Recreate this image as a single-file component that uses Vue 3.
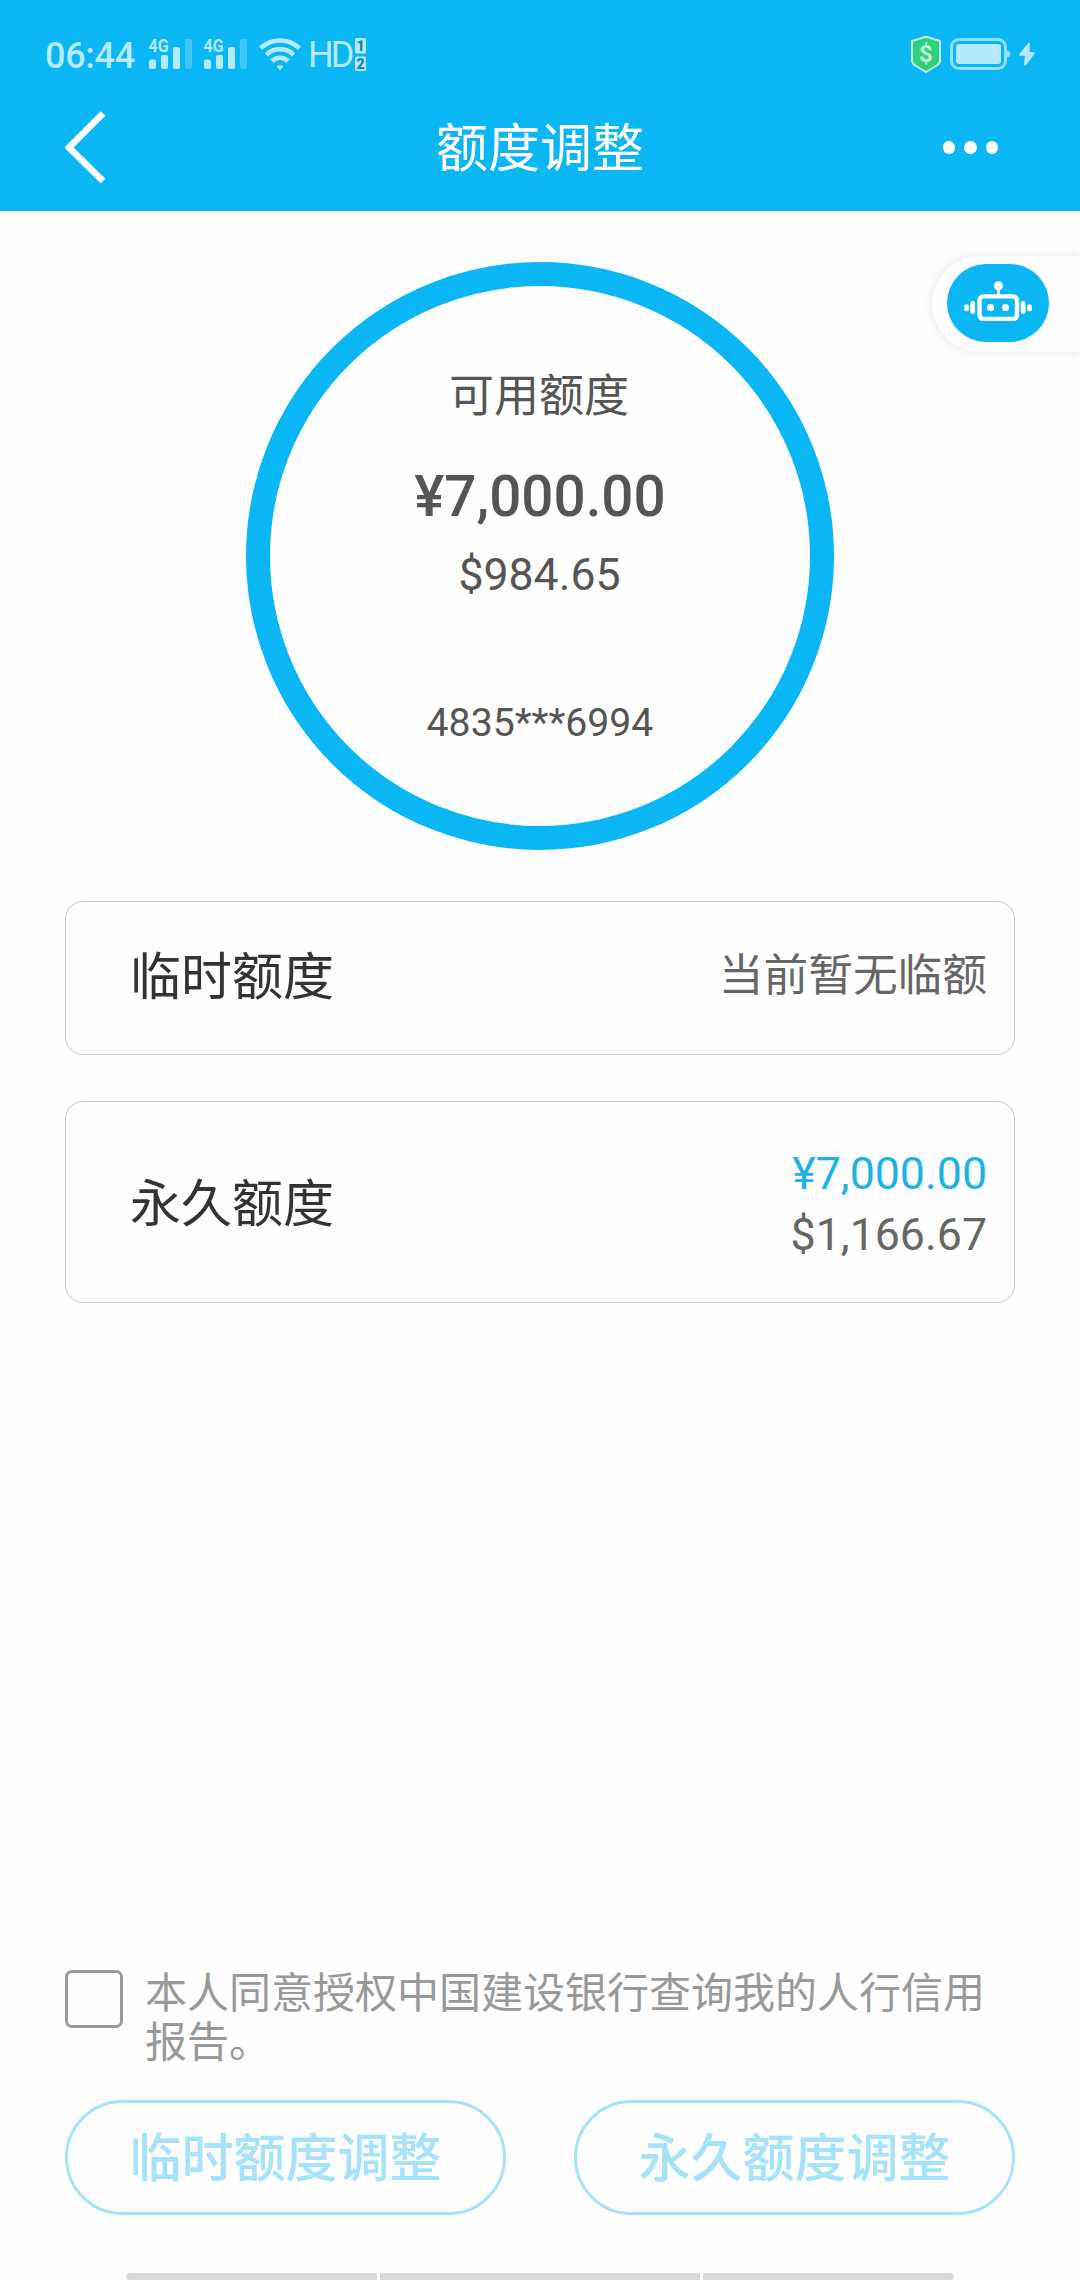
<script setup>
import { ref } from 'vue'

const agreed = ref(false)
const actions = ['临时额度调整', '永久额度调整']
</script>

<template>
  <div class="screen">
    <header class="header">
      <div class="status">
        <span class="time">06:44</span>
        <svg v-for="n in 2" :key="n" class="signal" width="44" height="32" viewBox="0 0 44 32">
          <text x="-0.5" y="13.5" textLength="20" lengthAdjust="spacingAndGlyphs">4G</text>
          <rect x="0" y="21.5" width="7" height="9.5" rx="2" />
          <rect x="12" y="17" width="7" height="14" rx="2" />
          <rect x="24" y="9" width="7" height="22" rx="2" />
          <rect x="36" y="1" width="7" height="30" rx="2" opacity=".3" />
        </svg>
        <svg class="wifi" width="42" height="33" viewBox="0 0 42 33">
          <g fill="none" stroke="#b6eafd" stroke-width="4.6">
            <path d="M1.5 10.3C12.5 -.2 29.5 -.2 40.5 10.3" />
            <path d="M7.3 16.8C15.2 9.2 26.8 9.2 34.7 16.8" />
            <path d="M13 23C17.7 18.6 24.3 18.6 29 23" />
          </g>
          <path d="M17.5 28.5Q21 26 24.5 28.5L21 32.5Z" fill="#b6eafd" />
        </svg>
        <span class="hd">HD</span>
        <svg class="sims" width="11" height="34" viewBox="0 0 11 34">
          <rect y="0" width="11" height="15.5" rx="1.5" fill="#b6eafd" />
          <rect y="18.5" width="11" height="14.5" rx="1.5" fill="#b6eafd" />
          <text x="5.5" y="12.8" text-anchor="middle">1</text>
          <text x="5.5" y="30.8" text-anchor="middle">2</text>
        </svg>
        <svg class="shield" width="32" height="39" viewBox="0 0 32 39">
          <path d="M16 1.8L30 6V26.5Q29.5 28.5 27.5 30L16 37L4.5 30Q2.5 28.5 2 26.5V6Z" fill="#2fd07c" stroke="#b9f5dc" stroke-width="2" stroke-linejoin="round" />
          <text x="16" y="27" text-anchor="middle">$</text>
        </svg>
        <svg class="battery" width="61" height="33" viewBox="0 0 61 33">
          <rect x="1.5" y="1.5" width="54" height="29" rx="7.5" fill="none" stroke="#90e0fc" stroke-width="3" />
          <rect x="6" y="6" width="45" height="20" rx="3" fill="#b6e8fb" />
          <path d="M57 12.5Q60.5 13.5 60.5 16T57 19.5Z" fill="#90e0fc" />
        </svg>
        <svg class="bolt" width="18" height="25" viewBox="0 0 18 25">
          <path d="M10.5 .8L1.2 12.2Q.8 13.8 2 13.8H7L6 22.8Q6.8 24.4 8 23.2L16.8 11.5Q17 10 15.6 9.9H11.8V1.3Q11.3 .3 10.5 .8Z" fill="#b6e8fb" />
        </svg>
      </div>
      <nav class="nav">
        <svg class="back" width="42" height="72" viewBox="0 0 42 72">
          <path d="M38 2.5L4 36.5L38 70" fill="none" stroke="#fff" stroke-width="6.6" />
        </svg>
        <h1>额度调整</h1>
        <div class="more"><i></i><i></i><i></i></div>
      </nav>
    </header>

    <div class="assistant">
      <div class="bot">
        <svg width="70" height="40" viewBox="0 0 70 40" fill="#fff">
          <circle cx="35.5" cy="4.7" r="4.5" />
          <rect x="34" y="7" width="3" height="9" />
          <rect x="16.5" y="15.4" width="37.5" height="22.6" rx="4" fill="none" stroke="#fff" stroke-width="4.4" />
          <circle cx="27.5" cy="26.5" r="3.6" />
          <circle cx="42.5" cy="26.5" r="3.6" />
          <rect x="7.3" y="20" width="4.8" height="13" rx="2.4" />
          <rect x="1" y="23.2" width="5" height="7" rx="2.5" />
          <rect x="57.7" y="20" width="4.8" height="13" rx="2.4" />
          <rect x="64" y="23.2" width="5" height="7" rx="2.5" />
        </svg>
      </div>
    </div>

    <main class="content">
      <section class="ring">
        <p class="ring-title">可用额度</p>
        <p class="ring-main">¥7,000.00</p>
        <p class="ring-usd">$984.65</p>
        <p class="ring-card">4835***6994</p>
      </section>

      <section class="card temporary">
        <h2>临时额度</h2>
        <p>当前暂无临额</p>
      </section>
      <section class="card permanent">
        <h2>永久额度</h2>
        <div class="amounts">
          <p class="cny">¥7,000.00</p>
          <p>$1,166.67</p>
        </div>
      </section>
    </main>

    <footer class="footer">
      <div class="agree" @click="agreed = !agreed">
        <span class="box" :class="{ checked: agreed }"></span>
        <p>本人同意授权中国建设银行查询我的人行信用报告。</p>
      </div>
      <div class="actions">
        <button v-for="a in actions" :key="a">{{ a }}</button>
      </div>
      <div class="gesture"><i></i><i class="mid"></i><i></i></div>
    </footer>
  </div>
</template>

<style>
html,
body {
  margin: 0;
  background: #fefefe;
}
</style>

<style scoped>
* {
  box-sizing: border-box;
}
.screen {
  position: relative;
  display: flex;
  flex-direction: column;
  width: 1080px;
  height: 2280px;
  overflow: hidden;
  background: #fefefe;
  font-family: Roboto, "Noto Sans CJK SC", sans-serif;
}
h1,
h2,
p {
  margin: 0;
  font-weight: 400;
  white-space: nowrap;
}
.header {
  height: 211px;
  background: #0ab6f4;
  color: #fff;
}
.status {
  display: flex;
  align-items: flex-start;
  height: 94px;
  padding: 38px 44px 0 45px;
  color: #b6eafd;
}
.status svg {
  flex: none;
}
.time {
  width: 104px;
  font-size: 36px;
  font-weight: 500;
  line-height: 36px;
  letter-spacing: -0.3px;
}
.signal {
  margin-right: 11px;
  fill: #b6eafd;
  overflow: visible;
}
.signal text {
  font: 700 18px Roboto, sans-serif;
}
.wifi {
  margin-right: 7px;
}
.hd {
  width: 47px;
  font-size: 36px;
  line-height: 34px;
  letter-spacing: -3px;
}
.sims text {
  font: 900 14px Roboto, sans-serif;
  fill: #0a86b8;
}
.shield {
  margin: -3px 8px 0 auto;
}
.shield text {
  font: 700 24px Roboto, sans-serif;
  fill: #b9f5dc;
}
.battery {
  margin-right: 7px;
}
.bolt {
  margin: 4px 0 0 0;
}
.nav {
  display: grid;
  grid-template-columns: 1fr auto 1fr;
  align-items: center;
  height: 106px;
  padding: 0 82px 0 65px;
}
h1 {
  margin: 5px -8.5px 0 8.5px;
  font-size: 52px;
  line-height: 70px;
}
.more {
  display: flex;
  justify-content: flex-end;
  gap: 9px;
}
.more i {
  width: 12.5px;
  height: 13px;
  border-radius: 50%;
  background: #fff;
}
.assistant {
  position: absolute;
  top: 255.5px;
  right: 0;
  width: 148px;
  height: 96.5px;
  padding: 8.5px 15px;
  border-radius: 48px 0 0 48px;
  background: #fefefe;
  box-shadow: 0 0 9px rgba(0, 0, 0, 0.1);
}
.bot {
  display: flex;
  align-items: center;
  justify-content: center;
  width: 102px;
  height: 78px;
  padding-bottom: 4px;
  border-radius: 39px;
  background: #0ab6f4;
}
.content {
  flex: 1;
  padding: 51px 65px 0;
}
.ring {
  width: 588px;
  height: 588px;
  margin: 0 auto;
  padding-top: 78px;
  border: 24px solid #0ab6f4;
  border-radius: 50%;
  color: #555;
  text-align: center;
}
.ring-title {
  margin-left: -2px;
  font-size: 45px;
  line-height: 66px;
}
.ring-main {
  margin-top: 32px;
  font-size: 56.6px;
  font-weight: 500;
  line-height: 70px;
}
.ring-usd {
  margin: 15px 0 0 -1px;
  font-size: 44.6px;
  line-height: 56px;
}
.ring-card {
  margin-top: 95px;
  font-size: 39.2px;
  line-height: 50px;
}
.card {
  display: flex;
  align-items: center;
  justify-content: space-between;
  border: 1px solid #c8c8c8;
  border-radius: 18px;
  padding: 0 27px 0 64px;
  color: #666;
}
.temporary {
  height: 154px;
  margin-top: 51px;
  padding-bottom: 3px;
}
.permanent {
  height: 202px;
  margin-top: 46px;
}
h2 {
  padding-top: 5px;
  color: #333;
  font-size: 51px;
  line-height: 70px;
}
.temporary h2 {
  padding-top: 3px;
}
.card p {
  font-size: 44.7px;
  line-height: 61px;
}
.amounts {
  padding-top: 6px;
  text-align: right;
}
.card .cny {
  color: #1bb2e8;
}
.footer {
  padding: 0 65px;
}
.agree {
  display: flex;
  align-items: flex-start;
  height: 130px;
  color: #999;
}
.box {
  flex: none;
  width: 58px;
  height: 58px;
  margin-right: 22px;
  border: 3px solid #999;
  border-radius: 7px;
}
.box.checked {
  background: #0ab6f4;
}
.agree p {
  width: 850px;
  margin-top: -1px;
  font-size: 42px;
  line-height: 49px;
  white-space: normal;
}
.actions {
  display: flex;
  justify-content: space-between;
}
.actions button {
  width: 441px;
  height: 115px;
  padding: 4px 0 0;
  border: 3px solid #a6e2f9;
  border-radius: 58px;
  background: transparent;
  color: #a6e2f9;
  font: 500 52px/70px Roboto, "Noto Sans CJK SC", sans-serif;
}
.gesture {
  display: flex;
  justify-content: center;
  gap: 3px;
  margin-top: 58px;
}
.gesture i {
  width: 251px;
  height: 7px;
  background: #d9d9d9;
}
.gesture .mid {
  width: 320px;
}
.gesture i:first-child {
  border-radius: 4px 0 0 4px;
}
.gesture i:last-child {
  border-radius: 0 4px 4px 0;
}
</style>
